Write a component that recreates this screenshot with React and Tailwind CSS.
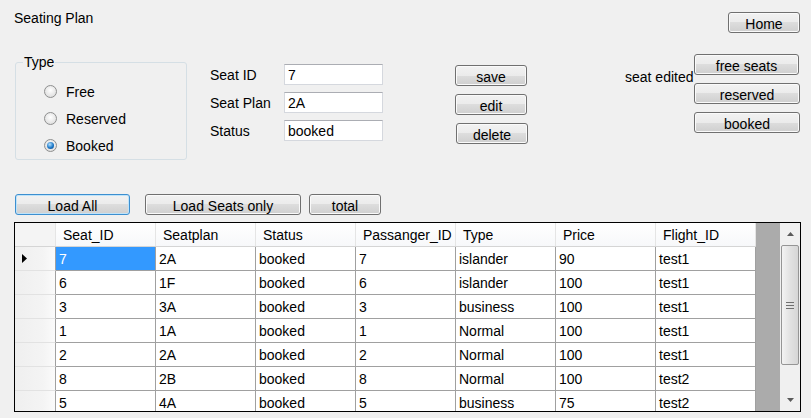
import React from "react";

const columns = ["Seat_ID", "Seatplan", "Status", "Passanger_ID", "Type", "Price", "Flight_ID"];

const seats = [
  ["7", "2A", "booked", "7", "islander", "90", "test1"],
  ["6", "1F", "booked", "6", "islander", "100", "test1"],
  ["3", "3A", "booked", "3", "business", "100", "test1"],
  ["1", "1A", "booked", "1", "Normal", "100", "test1"],
  ["2", "2A", "booked", "2", "Normal", "100", "test1"],
  ["8", "2B", "booked", "8", "Normal", "100", "test2"],
  ["5", "4A", "booked", "5", "business", "75", "test2"],
];

const WinButton = ({ children, className = "", focused = false }) => (
  <button
    className={`flex h-[21px] items-center justify-center rounded-[3px] border pt-[2px] text-[14px] leading-none text-black ${
      focused
        ? "border-[#3c8fd0] bg-[linear-gradient(to_bottom,#f2f2f2_0%,#ebebeb_50%,#dddddd_50%,#cfcfcf_100%)] shadow-[inset_0_0_0_1px_#bfe3f9]"
        : "border-[#707070] bg-[linear-gradient(to_bottom,#f2f2f2_0%,#ebebeb_50%,#dddddd_50%,#cfcfcf_100%)] shadow-[inset_0_0_0_1px_#fafafa]"
    } ${className}`}
  >
    {children}
  </button>
);

const Radio = ({ label, checked }) => (
  <div className="flex h-[27px] items-center">
    <span className="flex h-[13px] w-[13px] items-center justify-center rounded-full border border-[#8e8f8f] bg-[radial-gradient(circle_at_50%_40%,#ffffff,#d6d6d6)]">
      {checked && (
        <span className="h-[7px] w-[7px] rounded-full bg-[radial-gradient(circle_at_40%_35%,#b6e2ff,#1b78c8_55%,#0b3f7c)]" />
      )}
    </span>
    <span className="ml-[9px]">{label}</span>
  </div>
);

const Field = ({ label, value }) => (
  <div className="flex items-center">
    <span className="w-[74px]">{label}</span>
    <input
      readOnly
      value={value}
      className="h-[21px] w-[99px] border border-[#d5d8de] border-t-[#abadb3] bg-white pl-[3px] text-[14px] text-black outline-none"
    />
  </div>
);

export default function App() {
  return (
    <div className="h-[418px] w-[811px] overflow-hidden bg-[#f0f0f0] font-['Liberation_Sans',Arial,sans-serif] text-[14px] leading-[16px] text-black">
      {/* top area */}
      <div className="flex h-[194px] items-start">
        <div className="ml-[14px] flex w-[173px] flex-col">
          <div className="mt-[10px] h-[16px]">Seating Plan</div>
          <fieldset className="ml-[1px] mt-[28px] w-[172px] rounded-[3px] border border-[#d5dfe5]">
            <legend className="ml-[7px] px-[1px] leading-[16px]">Type</legend>
            <div className="pl-[28px] pt-[8px]">
              <Radio label="Free" />
              <Radio label="Reserved" />
              <Radio label="Booked" checked />
            </div>
          </fieldset>
        </div>

        <div className="ml-[23px] mt-[64px] flex flex-col gap-[7px]">
          <Field label="Seat ID" value="7" />
          <Field label="Seat Plan" value="2A" />
          <Field label="Status" value="booked" />
        </div>

        <div className="ml-[72px] mt-[65px] flex w-[73px] flex-col gap-[8px]">
          <WinButton className="w-[72px]">save</WinButton>
          <WinButton className="w-[72px]">edit</WinButton>
          <WinButton className="ml-[1px] w-[72px]">delete</WinButton>
        </div>

        <div className="ml-[97px] mt-[69px] w-[69px] overflow-hidden whitespace-nowrap">seat edited</div>

        <div className="mt-[12px] flex w-[106px] flex-col">
          <WinButton className="w-[72px] self-end">Home</WinButton>
          <WinButton className="mt-[21px] w-[105px]">free seats</WinButton>
          <WinButton className="mt-[8px] w-[106px]">reserved</WinButton>
          <WinButton className="mt-[8px] w-[106px]">booked</WinButton>
        </div>
      </div>

      {/* load buttons */}
      <div className="flex">
        <WinButton focused className="ml-[15px] w-[115px]">Load All</WinButton>
        <WinButton className="ml-[15px] w-[156px]">Load Seats only</WinButton>
        <WinButton className="ml-[8px] w-[72px]">total</WinButton>
      </div>

      {/* data grid */}
      <div className="ml-[14px] mt-[7px] flex h-[190px] w-[787px] overflow-hidden border border-black">
        <div className="flex w-[741px] flex-col bg-white">
          <div className="flex h-[24px] shrink-0 border-b border-[#d5d5d5] bg-[linear-gradient(to_bottom,#ffffff,#f7f8fa)]">
            <div className="w-[41px] border-r border-[#e5e5e5] bg-[#f4f4f4]" />
            {columns.map((c) => (
              <div key={c} className="flex w-[100px] items-center border-r border-[#e5e5e5] pl-[7px] pt-[1px]">
                {c}
              </div>
            ))}
          </div>
          {seats.map((row, i) => (
            <div key={i} className="flex h-[24px] shrink-0">
              <div className="flex w-[41px] items-center border-b border-r border-b-[#e2e2e2] border-r-[#a0a0a0] bg-[linear-gradient(to_right,#efefef,#f4f4f4_70%,#fbfbfb)] pl-[7px]">
                {i === 0 && (
                  <svg width="5" height="9" viewBox="0 0 5 9">
                    <polygon points="0,0 5,4.5 0,9" fill="#000" />
                  </svg>
                )}
              </div>
              {row.map((v, j) => (
                <div
                  key={j}
                  className={`flex w-[100px] items-center border-b border-r border-[#a0a0a0] pl-[3px] pt-[1px] ${
                    i === 0 && j === 0 ? "bg-[#3399ff] text-white" : ""
                  }`}
                >
                  {v}
                </div>
              ))}
            </div>
          ))}
        </div>
        <div className="flex-1 bg-[#ababab]" />
        <div className="flex w-[20px] flex-col bg-[#f0f0f0]">
          <div className="flex h-[22px] shrink-0 items-center justify-center">
            <svg width="7" height="4" viewBox="0 0 7 4">
              <polygon points="0,4 3.5,0 7,4" fill="#5a5a5a" />
            </svg>
          </div>
          <div className="mx-[1px] flex h-[120px] shrink-0 flex-col items-center justify-center gap-[2px] rounded-[2px] border border-[#959595] bg-[linear-gradient(to_right,#f3f3f3,#e2e2e2_50%,#d6d6d6)]">
            <span className="h-[1px] w-[8px] bg-[#6f6f6f]" />
            <span className="h-[1px] w-[8px] bg-[#6f6f6f]" />
            <span className="h-[1px] w-[8px] bg-[#6f6f6f]" />
          </div>
          <div className="flex-1" />
          <div className="flex h-[22px] shrink-0 items-center justify-center">
            <svg width="7" height="4" viewBox="0 0 7 4">
              <polygon points="0,0 7,0 3.5,4" fill="#5a5a5a" />
            </svg>
          </div>
        </div>
      </div>
    </div>
  );
}
